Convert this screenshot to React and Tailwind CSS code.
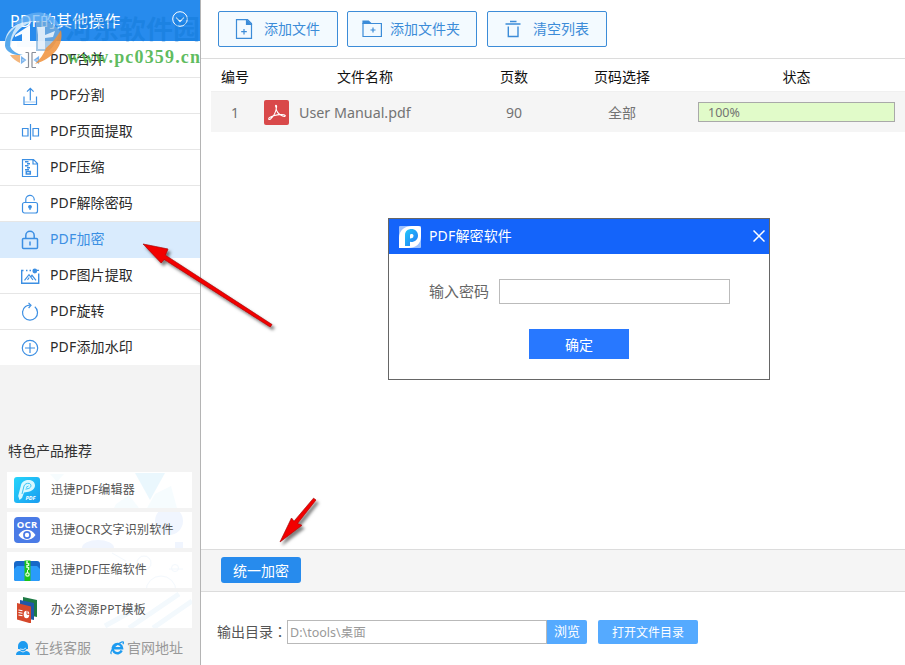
import { useState } from 'react';

const Svg = ({ size = 20, className = '', children }) => (
  <svg
    width={size}
    height={size}
    viewBox="0 0 20 20"
    fill="none"
    stroke="currentColor"
    strokeWidth="1.2"
    className={`shrink-0 ${className}`}
  >
    {children}
  </svg>
);

const MergeIcon = () => (
  <Svg>
    <g stroke="#8a8f98">
      <path d="M8.500 2.500v15M12 2.500v15M8.500 2.500H5.500M12 2.500H16M8.500 17.500H5.500M12 17.500H16" />
    </g>
    <path d="M1.500 7l4 3-4 3zM18.500 7l-4 3 4 3z" fill="currentColor" fillOpacity="0.4" strokeOpacity="0.6" />
  </Svg>
);

const SplitIcon = () => (
  <Svg>
    <path d="M4 10.500v8h12.500v-8M10.300 14.500V3M7 5.700l3.300-3.300 3.300 3.300" />
    <path d="M5 16h10.500" strokeOpacity="0.4" />
  </Svg>
);

const ExtractIcon = () => (
  <Svg>
    <path d="M2.500 6.500H8V14H2.500zM13 6.500h5.500V14H13zM10.500 2v16" />
  </Svg>
);

const CompressIcon = () => (
  <Svg>
    <path d="M2.500 1.600h11l4 4v12.900h-15zM13 1.800v4.200h4.300" />
    <path d="M5 3.800h3.500M7 5.800h3M5 7.800h3.500M7 9.800h3M5 11.800h4" strokeWidth="1.500" />
    <path d="M6.300 13.500h4v2.500h-4z" strokeWidth="1.500" />
  </Svg>
);

const UnlockIcon = () => (
  <Svg>
    <rect x="2.500" y="8.500" width="15" height="10.500" rx="2" />
    <path d="M5.800 8.300V6a4.200 4.200 0 0 1 8.400-.8v1.300" />
    <circle cx="10" cy="12.800" r="1.300" fill="currentColor" />
    <path d="M10 13v3" />
  </Svg>
);

const LockIcon = () => (
  <Svg>
    <rect x="2.500" y="8.500" width="15" height="10" rx="1" strokeWidth="1.500" />
    <path d="M5.800 8.300V5.500a4.200 4.200 0 0 1 8.400 0v2.800" strokeWidth="1.500" />
    <path d="M10 11.500v4" strokeWidth="1.500" />
  </Svg>
);

const ImageIcon = () => (
  <Svg>
    <path d="M3.500 4.500H1.700v12.800h17V7.500M6 4.500h1.500M9.500 4.500H11" strokeWidth="1.400" />
    <circle cx="14.800" cy="5" r="2.400" fill="currentColor" stroke="none" />
    <path d="M17 4.300h2M4.500 14.300L9 8.700l4 5.300M11 10.500l1-1.200 4 5M7.500 13.800l1.700-2.300" />
  </Svg>
);

const RotateIcon = () => (
  <Svg>
    <path d="M14.800 4.800a7.500 7.500 0 1 1-9.300-.2A7.500 7.500 0 0 1 11 3.300M8.500.8L11 3.300 8.600 6" />
  </Svg>
);

const PlusCircleIcon = () => (
  <Svg>
    <circle cx="10" cy="10" r="7.700" />
    <path d="M10 5v10M5 10h10" />
  </Svg>
);

const menu = [
  { name: 'PDF合并', icon: MergeIcon },
  { name: 'PDF分割', icon: SplitIcon },
  { name: 'PDF页面提取', icon: ExtractIcon },
  { name: 'PDF压缩', icon: CompressIcon },
  { name: 'PDF解除密码', icon: UnlockIcon },
  { name: 'PDF加密', icon: LockIcon },
  { name: 'PDF图片提取', icon: ImageIcon },
  { name: 'PDF旋转', icon: RotateIcon },
  { name: 'PDF添加水印', icon: PlusCircleIcon },
];

const EditorLogo = () => (
  <svg width="26" height="26" viewBox="0 0 26 26">
    <defs>
      <linearGradient id="editor" x1="0" y1="0" x2="1" y2="1">
        <stop offset="0" stopColor="#25d5fb" />
        <stop offset="1" stopColor="#1a9cf0" />
      </linearGradient>
    </defs>
    <rect width="26" height="26" rx="3" fill="url(#editor)" />
    <path d="M5.500 23l-1.300-4L7 8c1-3.500 4-5 7.500-5C19 3 21 5.500 21 8.500S18 14.500 13 15l-3 .5L8 21z" fill="#d8f8ff" />
    <path d="M8 17l2-8c.7-2 3-3 5-2.600 2.600.5 2.600 4-.2 5l-3.300.8M12 10.500l2.500-1.500" stroke="#38c4f5" fill="none" />
    <text x="11.500" y="23" fontSize="5.500" fontWeight="bold" fontStyle="italic" fill="#fff">PDF</text>
  </svg>
);

const OcrLogo = () => (
  <svg width="26" height="26" viewBox="0 0 26 26">
    <rect width="26" height="26" rx="4" fill="#4a7be6" />
    <text x="13" y="10.500" textAnchor="middle" textLength="20.500" fontSize="9.500" fontWeight="bold" fill="#fff">OCR</text>
    <path d="M4.500 18c4.500-7 12.500-7 17 0-4.500 6.500-12.500 6.500-17 0z" fill="#fff" />
    <circle cx="13" cy="18" r="3.900" fill="#4a7be6" />
    <circle cx="13" cy="18" r="2.200" fill="#fff" />
  </svg>
);

const ZipLogo = () => (
  <svg width="26" height="26" viewBox="0 0 26 26">
    <path d="M0 7a3 3 0 0 1 3-3h20a3 3 0 0 1 3 3v15a2 2 0 0 1-2 2H2a2 2 0 0 1-2-2z" fill="#1668c9" />
    <path d="M0 12l3-3h20l3 3v10a2 2 0 0 1-2 2H2a2 2 0 0 1-2-2z" fill="#2a9bfa" />
    <path d="M10.500 3.500h6V24h-6z" fill="#1cc31c" />
    <path d="M13 4v3M14.500 6v3M13 8v3M14.500 10v3" stroke="#d9ffd0" strokeWidth="1.500" />
    <circle cx="13.500" cy="17.500" r="1.700" fill="none" stroke="#e9ffe0" strokeWidth="1.200" />
    <path d="M13.500 13v3" stroke="#e9ffe0" />
  </svg>
);

const PptLogo = () => (
  <svg width="26" height="26" viewBox="0 0 26 26">
    <path d="M9 0l14 3v17l-14-3z" fill="#1f7a45" />
    <path d="M6 3l14 3v17L6 20z" fill="#2257a8" />
    <path d="M3 6l14 3.500v17L3 22.500z" fill="#d5482b" />
    <path d="M4.500 13l4 .7M4.500 15.500l4 .7M4.500 18l4 .7" stroke="#fff" strokeWidth="1.100" />
    <ellipse cx="12.500" cy="17.500" rx="2.800" ry="3.700" fill="#fff" />
    <path d="M13 17.300v-4M13 17.300h3" stroke="#d5482b" />
  </svg>
);

const products = [
  { name: '迅捷PDF编辑器', logo: EditorLogo },
  { name: '迅捷OCR文字识别软件', logo: OcrLogo },
  { name: '迅捷PDF压缩软件', logo: ZipLogo },
  { name: '办公资源PPT模板', logo: PptLogo },
];

// Pale shapes behind each product row
const decor = [
  <g key="a" fill="#e6f6fd">
    <path d="M128 1h30l-15 27z" fillOpacity="0.85" />
    <path d="M109 32l13-9 10 13h-25zM148 22l16-8 6 22h-30zM43 2h14l-7 8z" fillOpacity="0.35" />
  </g>,
  <g key="b" fill="#f0f5fe">
    <circle cx="162" cy="9" r="14" />
    <path d="M75 36a16 8 0 0 1 32 0zM168 30h8v6h-8z" />
  </g>,
  <g key="c" fill="none" stroke="#f3f8fd">
    <circle cx="137" cy="11" r="7" />
    <circle cx="154" cy="39" r="15" />
    <path d="M105 1l14 8M162 17h14" />
    <circle cx="168" cy="16" r="3.500" />
  </g>,
  <g key="d" stroke="#f3f9fd" strokeWidth="5">
    <path d="M122 36l50-34M146 36l39-27M98 34l36-20" />
  </g>,
];

const SiteMark = () => (
  <svg
    width="205"
    height="72"
    viewBox="0 0 205 72"
    className="absolute left-0 top-0 pointer-events-none"
  >
    {/* Ring and the steel blue right half */}
    <path d="M14 25C22 15 34 11 43 13c9 2 15 7 18 16-7-6-14-8-22-8-11 0-19 2-25 4z" fill="#6db5f3" fillOpacity="0.7" />
    <path d="M36 21c10-1 18 3 24 10-2 9-7 17-12 20H36z" fill="#7fb0dc" fillOpacity="0.7" />
    {/* Left crescent */}
    <path d="M5 46C4 34 11 26 21 23c4-1 9-2 13-2-9 3-16 8-20 15-2 3-3 7-3 10z" fill="#d9edfc" fillOpacity="0.9" />
    <path d="M5 46c0-9 5-15 11-19-4 6-6 12-6 19 2 5 7 8 13 9-9 1-17-3-18-9z" fill="#3d9be9" fillOpacity="0.85" />
    {/* White strokes */}
    <path d="M15 35l15-10v17h6v5H17v-5h5V34l-7 3z" fill="#f8fcff" />
    <path d="M37 27h8v8l10-4-2 6-8 1v11h-7V35z" fill="#eef6fd" fillOpacity="0.85" />
    {/* Orange swoosh */}
    <path d="M61 30c3 15-7 28-26 34 5-5 9-10 11-16 6-5 11-11 15-18z" fill="#f0913a" fillOpacity="0.85" />
    <path d="M10 55h10v8c-4-2-7-4-10-8z" fill="#f0a25a" fillOpacity="0.8" />
    <text
      x="65"
      y="39"
      fontSize="26"
      fontWeight="bold"
      textLength="135"
      lengthAdjust="spacingAndGlyphs"
      fill="#0872cf"
      fillOpacity="0.36"
      fontFamily="'Noto Sans CJK SC', sans-serif"
    >
      河东软件园
    </text>
    <text
      x="67"
      y="63"
      fontSize="18"
      fontWeight="bold"
      textLength="133"
      fill="#43b043"
      fillOpacity="0.85"
      fontFamily="'Liberation Serif', serif"
    >
      www.pc0359.cn
    </text>
  </svg>
);

const Sidebar = ({ active, onSelect }) => (
  <aside className="relative w-[201px] shrink-0 flex flex-col bg-[#f3f3f3] border-r border-[#b4b4b4]">
    <div className="h-[41px] shrink-0 flex items-center justify-between pl-[10px] pr-3 bg-[#278bed] text-white">
      <span className="text-[16px] leading-5 tracking-[0.1px]">PDF的其他操作</span>
      <svg width="16" height="16" viewBox="0 0 16 16" fill="none" stroke="#fff" className="-mt-1">
        <circle cx="8" cy="8" r="7.300" />
        <path d="M4 6.500l4 4 4-4" strokeWidth="1.200" />
      </svg>
    </div>

    {/* Tools */}
    <ul className="bg-white pt-px text-sm">
      {menu.map(({ name, icon: Icon }) => (
        <li
          key={name}
          onClick={() => onSelect(name)}
          className={`h-9 flex items-center gap-2.5 pl-5 border-b last:h-[35px] last:border-b-0 ${
            active === name
              ? 'bg-[#d9ebfd] border-[#d9ebfd] text-[#3c8fe3]'
              : 'border-[#e6e6e6] text-[#2b2b2b]'
          }`}
        >
          <span className="text-[#3c8fe3]">
            <Icon />
          </span>
          <span className="pb-px tracking-[0.15px]">{name}</span>
        </li>
      ))}
    </ul>

    {/* Recommended products */}
    <div className="mt-auto h-[224px] px-2 pl-[7px]">
      <h2 className="pl-px text-sm leading-5 text-[#333]">特色产品推荐</h2>
      <div className="mt-[11px] flex flex-col gap-1">
        {products.map(({ name, logo: Logo }, i) => (
          <div key={name} className="relative h-9 flex items-center gap-[11px] pl-[7px] bg-white">
            <svg width="185" height="36" className="absolute inset-0">
              {decor[i]}
            </svg>
            <span className="relative shrink-0">
              <Logo />
            </span>
            <span className="relative text-xs tracking-[0.2px] text-[#555]">{name}</span>
          </div>
        ))}
      </div>
      <div className="mt-2.5 flex items-center pl-[9px] text-sm leading-5 text-[#999]">
        <svg width="14" height="14" viewBox="0 0 14 14" fill="#1d9bf0">
          <path d="M2 5a5 5 0 0 1 10 0v3h-1.500c-.5 1.500-2 2.500-3.500 2.500S4 9.500 3.500 8H2z" />
          <path d="M0 14c0-3 2-4 4-4l3 1.500L10 10c2 0 4 1 4 4z" />
          <path d="M4 8q3.500 1.500 6-1" stroke="#fff" strokeWidth=".8" fill="none" />
        </svg>
        <span className="ml-[5px]">在线客服</span>
        <svg width="14" height="14" viewBox="0 0 14 14" fill="none" stroke="#1d9bf0" className="ml-[19px]">
          <path d="M11.700 9.500a4.700 4.700 0 1 1 .4-2.200H4" strokeWidth="2.400" />
          <path d="M1.500 13c-2-1 1-6 5-9s7-4 7-2.500c0 .5-.2 1-.6 1.700" strokeWidth="1.200" />
        </svg>
        <span className="ml-[3px]">官网地址</span>
      </div>
    </div>

    <SiteMark />
  </aside>
);

const ToolButton = ({ width, children }) => (
  <button
    className={`${width} h-9 flex items-center justify-center rounded-[2px] border border-[#3c8cd8] bg-[#f3faff] pr-0.5 text-sm text-[#3c8cd8]`}
  >
    {children}
  </button>
);

const Toolbar = () => (
  <div className="h-[59px] shrink-0 flex gap-[9px] pt-[11px] pl-[17px] border-b border-[#dcdcdc]">
    <ToolButton width="w-[120px]">
      <Svg className="mr-2.5">
        <path d="M2.500.6h11l4 4v14.800h-15zM10 10v5.500M7.200 12.700h5.600" />
        <path d="M12.500 1v4.500H17z" fill="currentColor" />
      </Svg>
      添加文件
    </ToolButton>
    <ToolButton width="w-[130px]">
      <Svg className="mr-2">
        <path d="M1 4.500h18.400v13H1zM11 8.500v5M8.500 11h5" />
        <path d="M1 4.500V2h5.500L9 4.500z" fill="currentColor" />
      </Svg>
      添加文件夹
    </ToolButton>
    <div className="ml-px flex">
      <ToolButton width="w-[120px]">
        <Svg className="mr-2.5">
          <path d="M2.500 5h15M7 2.500h6.500M5.300 7.500v10h9.700v-10" strokeWidth="1.400" />
        </Svg>
        清空列表
      </ToolButton>
    </div>
  </div>
);

const columns = 'grid grid-cols-[48px_213px_84px_132px_217px] items-center';

const FileTable = () => (
  <div className="ml-[10px]">
    <div className={`${columns} h-[33px] border-b border-[#f0f0f0] pt-1 text-sm text-center text-[#111]`}>
      <span>编号</span>
      <span className="pr-px">文件名称</span>
      <span>页数</span>
      <span>页码选择</span>
      <span>状态</span>
    </div>
    <div className={`${columns} h-10 bg-[#f5f5f5] text-center text-[#737373]`}>
      <span className="pt-px text-sm">1</span>
      <div className="flex items-center pl-[5px]">
        <svg width="25" height="25" viewBox="0 0 25 25">
          <rect width="25" height="25" rx="2" fill="#d9494a" />
          <path
            d="M12 7c-1.500-2 1.200-2.500.5.500-.5 3.500-3 9-6 11.500-2 1.500-3-.5 0-2 3.500-2 10-3 13.500-2.300 2.500.8 1 2.300-1.500 1.300C15 14.500 12 11 12 7z"
            fill="none"
            stroke="#fff"
            strokeWidth="1.100"
          />
        </svg>
        <span className="ml-[10px] pt-0.5 text-[14.300px]">User Manual.pdf</span>
      </div>
      <span className="pt-px text-sm">90</span>
      <span className="pt-px text-sm">全部</span>
      <div className="ml-[10px] w-[197px] h-5 border border-[#a9a9a9] bg-[#e1fbc9] pl-[9px] text-left text-[12.500px] leading-5">
        100%
      </div>
    </div>
  </div>
);

const PasswordDialog = ({ onClose }) => {
  const [password, setPassword] = useState('');

  return (
    <div className="absolute left-[388px] top-[218px] w-[382px] h-[162px] border border-[#666] bg-white">
      <div className="h-[35px] flex items-center pl-[10px] pr-1 bg-[#1464fa] text-white">
        <svg width="22" height="22" viewBox="0 0 22 22">
          <defs>
            <linearGradient id="p" x1="0" y1="0" x2="1" y2="1">
              <stop offset="0" stopColor="#22c8fb" />
              <stop offset="1" stopColor="#2277f4" />
            </linearGradient>
          </defs>
          <rect width="22" height="22" rx="1" fill="#9cc1fd" />
          <path d="M0 22V12C0 4 6 0 13 0h6q3 0 3 3v7c0 8-5 12-13 12z" fill="#fff" />
          <path d="M6 20V9c0-4 3-6 6.500-6S19 5.500 19 9.500 16 16 12 16l-1-.3V20z" fill="url(#p)" />
          <path d="M11 12.500V9.500c0-2 3.500-2 3.500.3s-2 2.700-3.500 2.700z" fill="#fff" />
        </svg>
        <span className="ml-[8px] pb-0.5 text-sm tracking-[0.15px]">PDF解密软件</span>
        <button onClick={onClose} className="ml-auto pb-px">
          <svg width="12" height="12" viewBox="0 0 12 12" stroke="#fff" strokeWidth="1.500">
            <path d="M.5.5l11 11M11.500.5l-11 11" />
          </svg>
        </button>
      </div>
      <div className="mt-[25px] ml-10 flex items-center">
        <span className="pb-0.5 text-[15px] leading-5 text-[#666]">输入密码</span>
        <input
          type="password"
          value={password}
          onChange={(e) => setPassword(e.target.value)}
          className="ml-[10px] w-[231px] h-[25px] border border-[#bbb] bg-white outline-none"
        />
      </div>
      <button className="block mt-[25px] mx-auto w-[100px] h-[30px] pt-0.5 bg-[#2878ff] text-sm text-white">
        确定
      </button>
    </div>
  );
};

// Red pointer arrows that mark the steps
const Arrows = () => (
  <svg
    width="905"
    height="665"
    viewBox="0 0 905 665"
    className="absolute left-0 top-0 pointer-events-none"
  >
    <defs>
      <filter id="shadow" x="-20%" y="-20%" width="140%" height="150%">
        <feDropShadow dx="2.500" dy="3" stdDeviation="1.800" floodColor="#000" floodOpacity="0.5" />
      </filter>
    </defs>
    <g fill="#f20000" stroke="#a80c0c" strokeWidth="0.700" strokeLinejoin="round" filter="url(#shadow)">
      <path d="M143 244l25 5-2.600 6.200L272 324.500l-1.800 2.500-106-67.500-3 3.500z" />
      <path d="M280 542l11.500-24 2.500 3.200 19.500-23 2.500 1.800-18.500 23.500 4.500 1.800z" />
    </g>
  </svg>
);

const App = () => {
  const [active, setActive] = useState('PDF加密');
  const [dialogOpen, setDialogOpen] = useState(true);

  return (
    <div className="relative w-[905px] h-[665px] flex overflow-hidden bg-white font-['Noto_Sans','Noto_Sans_CJK_SC',sans-serif]">
      <Sidebar active={active} onSelect={setActive} />

      <main className="flex-1 min-w-0 flex flex-col">
        <Toolbar />
        <FileTable />

        {/* Batch action */}
        <div className="mt-auto h-[43px] shrink-0 flex items-start pt-[7px] pl-5 border-y border-[#dcdcdc] bg-[#f5f5f5]">
          <button className="w-20 h-[26px] pt-px rounded-[3px] bg-[#278bed] text-sm text-white">
            统一加密
          </button>
        </div>

        {/* Output folder */}
        <div className="h-[73px] shrink-0 flex items-start pt-7 pl-4">
          <span className="w-[70px] text-sm leading-[22px] text-[#555] whitespace-nowrap">
            输出目录<span className="font-['Noto_Sans_CJK_TC',sans-serif]">：</span>
          </span>
          <div className="w-[260px] h-6 border border-[#b9b9b9] pl-0.5 text-[12.500px] leading-6 text-[#999]">
            D:\tools\桌面
          </div>
          <button className="w-10 h-6 rounded-r-[2px] bg-[#55aaff] text-[13px] text-white">浏览</button>
          <button className="ml-[11px] w-[100px] h-6 pt-px rounded-[2px] bg-[#55aaff] text-xs text-white">
            打开文件目录
          </button>
        </div>
      </main>

      {dialogOpen && <PasswordDialog onClose={() => setDialogOpen(false)} />}
      <Arrows />
    </div>
  );
};

export default App;
